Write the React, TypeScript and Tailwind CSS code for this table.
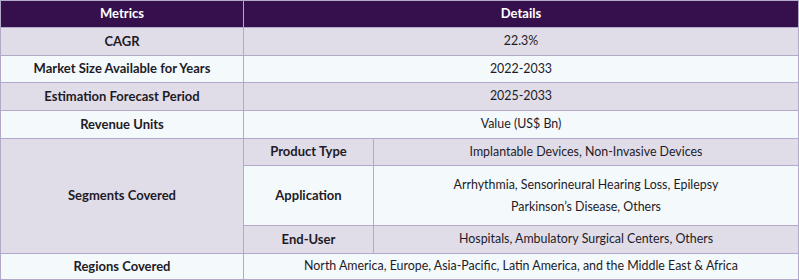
const rowA = "bg-[#e0dde9]";
const rowB = "bg-[#f4f9fc]";
const cell = "border border-[#b3a9c9] text-center align-middle px-2";
const head = `${cell} font-bold text-[13px]`;

export default function App() {
  return (
    <div className="w-[799px] h-[280px] bg-white" style={{ fontFamily: "Lato, 'Open Sans', sans-serif" }}>
      <table className="w-[799px] table-fixed border-collapse text-[12.4px] text-[#1e1b26]">
        <colgroup>
          <col className="w-[243px]" />
          <col className="w-[130px]" />
          <col />
        </colgroup>
        <tbody>
          <tr className="h-[27px] bg-[#36104c] text-white">
            <td className={head}>Metrics</td>
            <td className={head} colSpan={2}>Details</td>
          </tr>
          <tr className={`h-[28px] ${rowA}`}>
            <td className={head}>CAGR</td>
            <td className={cell} colSpan={2}>22.3%</td>
          </tr>
          <tr className={`h-[27px] ${rowB}`}>
            <td className={head}>Market Size Available for Years</td>
            <td className={cell} colSpan={2}>2022-2033</td>
          </tr>
          <tr className={`h-[28px] ${rowA}`}>
            <td className={head}>Estimation Forecast Period</td>
            <td className={cell} colSpan={2}>2025-2033</td>
          </tr>
          <tr className={`h-[28px] ${rowB}`}>
            <td className={head}>Revenue Units</td>
            <td className={cell} colSpan={2}>Value (US$ Bn)</td>
          </tr>
          <tr className={`h-[27px] ${rowA}`}>
            <td className={head} rowSpan={3}>Segments Covered</td>
            <td className={head}>Product Type</td>
            <td className={cell}>Implantable Devices, Non-Invasive Devices</td>
          </tr>
          <tr className={`h-[60px] ${rowB}`}>
            <td className={head}>Application</td>
            <td className={`${cell} leading-[22px]`}>
              <p>Arrhythmia, Sensorineural Hearing Loss, Epilepsy</p>
              <p>Parkinson’s Disease, Others</p>
            </td>
          </tr>
          <tr className={`h-[28px] ${rowA}`}>
            <td className={head}>End-User</td>
            <td className={cell}>Hospitals, Ambulatory Surgical Centers, Others</td>
          </tr>
          <tr className={`h-[26px] ${rowB}`}>
            <td className={head}>Regions Covered</td>
            <td className={cell} colSpan={2}>North America, Europe, Asia-Pacific, Latin America, and the Middle East &amp; Africa</td>
          </tr>
        </tbody>
      </table>
    </div>
  );
}
